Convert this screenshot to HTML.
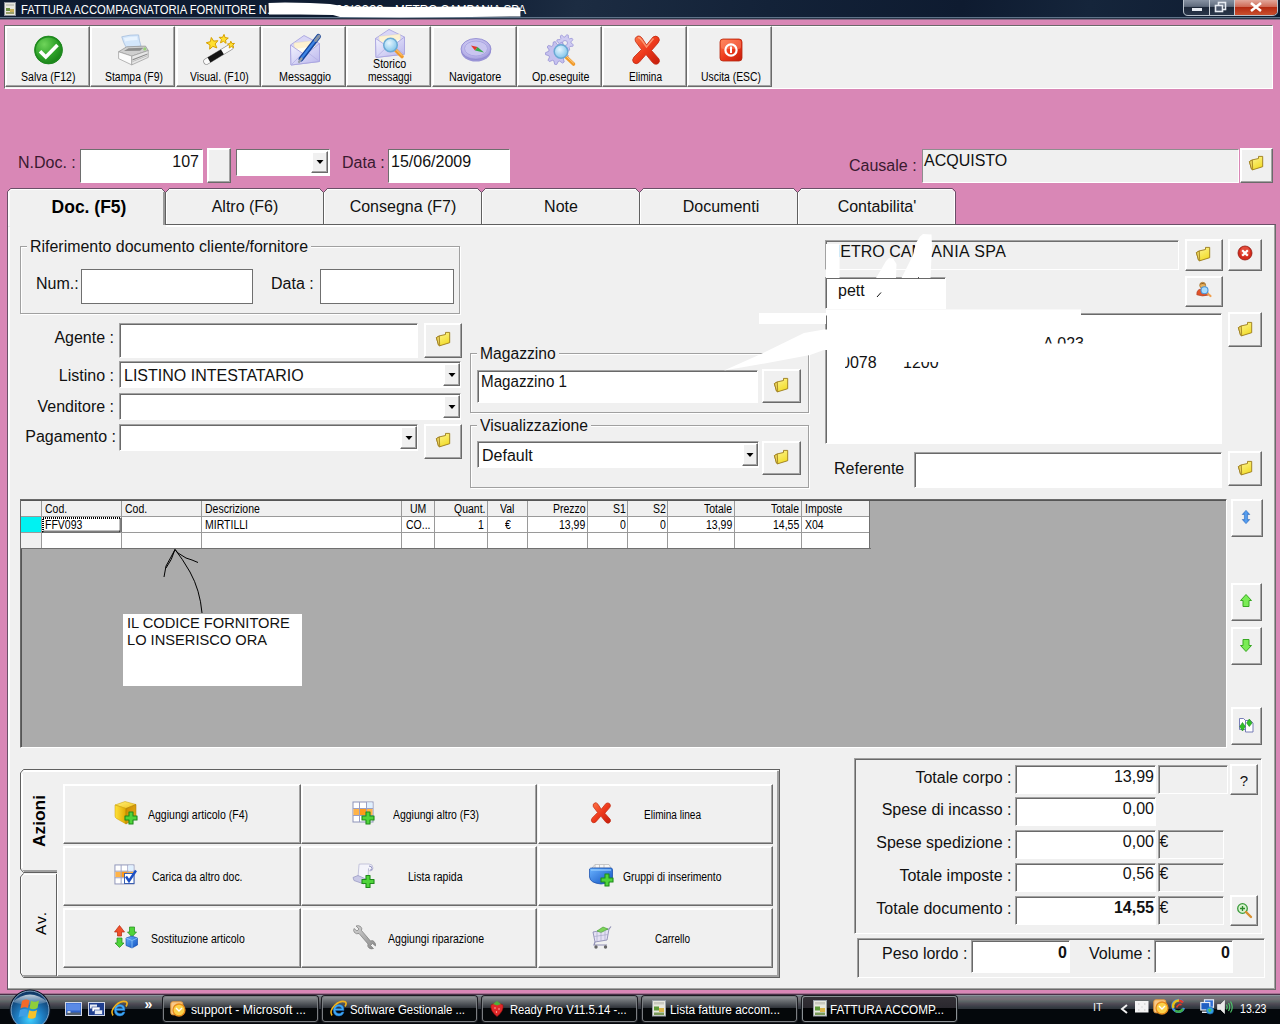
<!DOCTYPE html>
<html><head><meta charset="utf-8"><title>FATTURA ACCOMPAGNATORIA FORNITORE</title>
<style>
*{box-sizing:border-box;margin:0;padding:0}
html,body{width:1280px;height:1024px;overflow:hidden}
body{background:#d987b6;font-family:"Liberation Sans",sans-serif;font-size:16px;color:#111;position:relative}
.a{position:absolute}
.t{position:absolute;white-space:nowrap;line-height:1}
.panel{background:#f0f0f0}
.btn{background:#f0f0f0;border:1px solid;border-color:#fff #6a6a6a #6a6a6a #fff;box-shadow:inset -1px -1px 0 #a3a3a3, inset 1px 1px 0 #fff}
.inp{background:#fff;border:1px solid;border-color:#a2a2a2 #fff #fff #a2a2a2;box-shadow:inset 1px 1px 0 #696969}
.inpg{background:#f0f0f0;border:1px solid;border-color:#a2a2a2 #fff #fff #a2a2a2;box-shadow:inset 1px 1px 0 #6e6e6e}
.inpp{background:#fff;border:1px solid;border-color:#6e6e6e #fff #fff #6e6e6e}
.inpgp{background:#f0f0f0;border:1px solid;border-color:#8e8e8e #fff #fff #8e8e8e}
.flat{background:#fff;border:1px solid #6f6f6f}
.gb{border:1px solid #a0a0a0;box-shadow:1px 1px 0 #fff, inset 1px 1px 0 #fff}
.leg{position:absolute;background:#f0f0f0;height:14px}
svg{position:absolute;overflow:visible}
</style></head><body>
<div class="a " style="left:0px;top:0px;width:1280px;height:20px;background:linear-gradient(100deg,#0e1b30 0,#0f1d33 35%,#1c2c42 45%,#132238 60%,#0e1b30 75%,#15253b 85%,#0e1b30 100%)"></div>
<div class="a " style="left:0px;top:17px;width:1280px;height:1px;background:#5f7389"></div>
<div class="a " style="left:0px;top:18px;width:1280px;height:1px;background:#2a3648"></div>
<div class="a " style="left:0px;top:19px;width:1280px;height:1px;background:#8a6a85"></div>
<svg style="left:4px;top:2px" width="13" height="15" viewBox="0 0 13 15"><rect x="0.5" y="0.5" width="11" height="13" fill="#e8e8e0" stroke="#8a8f99"/><rect x="2" y="2" width="8" height="2" fill="#c9c9c0"/><rect x="2" y="6" width="4" height="3" fill="#6c8f3f"/><rect x="6" y="7" width="4" height="3" fill="#c8b15a"/><rect x="2" y="10" width="8" height="2" fill="#9aa06a"/></svg>
<div class="t" style="left:21.00px;top:4.24px;font-size:12px;color:#fff;transform:scaleX(0.9380);transform-origin:0 0;">FATTURA ACCOMPAGNATORIA FORNITORE N</div>
<div class="t" style="left:267.00px;top:4.24px;font-size:12px;color:#fff;transform:scaleX(1.0395);transform-origin:0 0;">. 107 del 15/06/</div>
<div class="t" style="left:354.00px;top:4.24px;font-size:12px;color:#fff;transform:scaleX(1.1168);transform-origin:0 0;">2009 -</div>
<div class="t" style="left:395.00px;top:4.24px;font-size:12px;color:#fff;transform:scaleX(0.9758);transform-origin:0 0;">METRO CAMPANIA SPA</div>
<svg style="left:0;top:0" width="1280" height="20" viewBox="0 0 1280 20"><path d="M268.500,3 L285,2.500 L310,3 L330,4 L342,6 L352,6.500 L400,7 L470,6.500 L520,7.500 L520.500,16.500 L470,17 L400,17.500 L340,17 L333,15 L300,14.500 L269,14.500 Z" fill="#fff"/></svg>
<svg style="left:1183px;top:0" width="96" height="17" viewBox="0 0 96 17">
<defs><linearGradient id="cg" x1="0" y1="0" x2="0" y2="1"><stop offset="0" stop-color="#8d98a8"/><stop offset=".45" stop-color="#5f6b7d"/><stop offset=".5" stop-color="#1c2738"/><stop offset="1" stop-color="#2a374b"/></linearGradient>
<linearGradient id="cr" x1="0" y1="0" x2="0" y2="1"><stop offset="0" stop-color="#e2a79b"/><stop offset=".45" stop-color="#cf6a56"/><stop offset=".5" stop-color="#b42a12"/><stop offset="1" stop-color="#c9502f"/></linearGradient></defs>
<path d="M0.5,-1 V11 Q0.5,15.5 5,15.5 H89 Q94.5,15.5 94.5,11 V-1 Z" fill="url(#cg)" stroke="#b9c2cc" stroke-width="1"/>
<path d="M52,0 H94 V11 Q94,15 89,15 H52 Z" fill="url(#cr)"/>
<path d="M26.5,0 V15 M51.5,0 V15" stroke="#c5ccd4" stroke-width="1"/>
<rect x="9" y="8" width="10" height="3" fill="#e6ebf2"/>
<rect x="35.5" y="2.500" width="7" height="7" fill="none" stroke="#e6ebf2" stroke-width="1.6"/><rect x="32.500" y="5.500" width="7" height="6" fill="#49556a" stroke="#e6ebf2" stroke-width="1.6"/>
<path d="M68,3 L78,11 M78,3 L68,11" stroke="#fff" stroke-width="2.6"/>
</svg>
<div class="a panel" style="left:4px;top:25px;width:1269px;height:64px;border:1px solid;border-color:#6a6a6a #fff #fff #6a6a6a;box-shadow:inset 1px 1px 0 #fff"></div>
<div class="a btn" style="left:5px;top:26px;width:85px;height:61px;"></div>
<div class="t" style="left:21.25px;top:70.82px;font-size:12.5px;color:#000;transform:scaleX(0.8435);transform-origin:0 0;">Salva (F12)</div>
<div class="a btn" style="left:90px;top:26px;width:85px;height:61px;"></div>
<div class="t" style="left:104.50px;top:70.82px;font-size:12.5px;color:#000;transform:scaleX(0.8349);transform-origin:0 0;">Stampa (F9)</div>
<div class="a btn" style="left:176px;top:26px;width:85px;height:61px;"></div>
<div class="t" style="left:190.12px;top:70.82px;font-size:12.5px;color:#000;transform:scaleX(0.8318);transform-origin:0 0;">Visual. (F10)</div>
<div class="a btn" style="left:261px;top:26px;width:85px;height:61px;"></div>
<div class="t" style="left:278.50px;top:70.82px;font-size:12.5px;color:#000;transform:scaleX(0.8602);transform-origin:0 0;">Messaggio</div>
<div class="a btn" style="left:346px;top:26px;width:85px;height:61px;"></div>
<div class="a btn" style="left:432px;top:26px;width:85px;height:61px;"></div>
<div class="t" style="left:449.38px;top:70.82px;font-size:12.5px;color:#000;transform:scaleX(0.8643);transform-origin:0 0;">Navigatore</div>
<div class="a btn" style="left:517px;top:26px;width:85px;height:61px;"></div>
<div class="t" style="left:531.75px;top:70.82px;font-size:12.5px;color:#000;transform:scaleX(0.8530);transform-origin:0 0;">Op.eseguite</div>
<div class="a btn" style="left:602px;top:26px;width:85px;height:61px;"></div>
<div class="t" style="left:629.00px;top:70.82px;font-size:12.5px;color:#000;transform:scaleX(0.8051);transform-origin:0 0;">Elimina</div>
<div class="a btn" style="left:687px;top:26px;width:85px;height:61px;"></div>
<div class="t" style="left:700.50px;top:70.82px;font-size:12.5px;color:#000;transform:scaleX(0.8307);transform-origin:0 0;">Uscita (ESC)</div>
<div class="t" style="left:372.88px;top:57.82px;font-size:12.5px;color:#000;transform:scaleX(0.8546);transform-origin:0 0;">Storico</div>
<div class="t" style="left:367.62px;top:70.82px;font-size:12.5px;color:#000;transform:scaleX(0.8178);transform-origin:0 0;">messaggi</div>
<div class="t" style="left:18.00px;top:154.86px;font-size:16px;color:#3a1a30;">N.Doc. :</div>
<div class="a inpp" style="left:80px;top:149px;width:123px;height:34px;"></div>
<div class="t" style="left:172.30px;top:154.36px;font-size:16px;color:#111;">107</div>
<div class="a btn" style="left:207px;top:148px;width:24px;height:35px;"></div>
<div class="a inpp" style="left:236px;top:149px;width:94px;height:27px;"></div>
<div class="t" style="left:342.00px;top:154.86px;font-size:16px;color:#3a1a30;">Data :</div>
<div class="a inpp" style="left:388px;top:149px;width:122px;height:34px;"></div>
<div class="t" style="left:391.00px;top:154.36px;font-size:16px;color:#111;">15/06/2009</div>
<div class="t" style="left:849.00px;top:157.86px;font-size:16px;color:#3a1a30;">Causale :</div>
<div class="a inpgp" style="left:922px;top:149px;width:317px;height:34px;"></div>
<div class="t" style="left:924.00px;top:153.36px;font-size:16px;color:#111;">ACQUISTO</div>
<div class="a btn" style="left:1240px;top:148px;width:33px;height:35px;"></div>
<div class="a panel" style="left:7px;top:224px;width:1269px;height:766px;border:1px solid;border-color:#6a5068 #6a6a6a #6a6a6a #6a5068;box-shadow:inset -1px -1px 0 #a3a3a3, inset 1px 1px 0 #fff, inset 2px 2px 0 #fff"></div>
<svg style="left:0;top:0" width="1280" height="1024" viewBox="0 0 1280 1024"><path d="M8,227 V192 L11,189 H952 L955,192 V224 H166 V227 Z" fill="#f0f0f0"/><path d="M7.500,226 V191.500 L10.500,188.500 H952.500 L955.500,191.500 V224" fill="none" stroke="#6a5068" stroke-width="1"/><path d="M8.500,226 V192 L11,189.500 H952" fill="none" stroke="#fff" stroke-width="1"/><path d="M9.500,226 V193" fill="none" stroke="#fff" stroke-width="1" opacity=".7"/><path d="M954.500,192 V224" fill="none" stroke="#fff" stroke-width="1"/><path d="M161.5,188 L165.5,192.500 L169.5,188 Z" fill="#d987b6"/><path d="M161.5,188.500 L165.5,192.500 L169.5,188.500" fill="none" stroke="#6a5068" stroke-width="1"/><rect x="163" y="192" width="2" height="33" fill="#9a9a9a"/><rect x="165" y="192" width="1" height="33" fill="#606060"/><rect x="166" y="193" width="1" height="31" fill="#fff"/><path d="M319.5,188 L323.5,192.500 L327.5,188 Z" fill="#d987b6"/><path d="M319.5,188.500 L323.5,192.500 L327.5,188.500" fill="none" stroke="#6a5068" stroke-width="1"/><rect x="323" y="192" width="1" height="33" fill="#606060"/><rect x="324" y="193" width="1" height="31" fill="#fff"/><path d="M477.5,188 L481.5,192.500 L485.5,188 Z" fill="#d987b6"/><path d="M477.5,188.500 L481.5,192.500 L485.5,188.500" fill="none" stroke="#6a5068" stroke-width="1"/><rect x="481" y="192" width="1" height="33" fill="#606060"/><rect x="482" y="193" width="1" height="31" fill="#fff"/><path d="M635.5,188 L639.5,192.500 L643.5,188 Z" fill="#d987b6"/><path d="M635.5,188.500 L639.5,192.500 L643.5,188.500" fill="none" stroke="#6a5068" stroke-width="1"/><rect x="639" y="192" width="1" height="33" fill="#606060"/><rect x="640" y="193" width="1" height="31" fill="#fff"/><path d="M793.5,188 L797.5,192.500 L801.5,188 Z" fill="#d987b6"/><path d="M793.5,188.500 L797.5,192.500 L801.5,188.500" fill="none" stroke="#6a5068" stroke-width="1"/><rect x="797" y="192" width="1" height="33" fill="#606060"/><rect x="798" y="193" width="1" height="31" fill="#fff"/><rect x="166" y="224" width="790" height="1" fill="#606060"/></svg>
<div class="t" style="left:51.57px;top:199.09px;font-size:17.5px;color:#000;font-weight:bold;">Doc. (F5)</div>
<div class="t" style="left:211.66px;top:199.36px;font-size:16px;color:#111;">Altro (F6)</div>
<div class="t" style="left:349.64px;top:199.36px;font-size:16px;color:#111;">Consegna (F7)</div>
<div class="t" style="left:544.10px;top:199.36px;font-size:16px;color:#111;">Note</div>
<div class="t" style="left:682.76px;top:199.36px;font-size:16px;color:#111;">Documenti</div>
<div class="t" style="left:837.67px;top:199.36px;font-size:16px;color:#111;">Contabilita'</div>
<svg style="left:0;top:0" width="0" height="0"><defs><linearGradient id="gFold" x1="0" y1="0" x2=".6" y2="1"><stop offset="0" stop-color="#fff79a"/><stop offset="1" stop-color="#f2dc2a"/></linearGradient></defs></svg>
<div class="a btn" style="left:311px;top:151px;width:17px;height:22px;"></div>
<svg style="left:315.5px;top:160.0px" width="8" height="4" viewBox="0 0 8 4"><path d="M0.500,0 H7.500 L4,4 Z" fill="#000"/></svg>
<svg style="left:1249px;top:156px" width="14" height="14" viewBox="0 0 14 14"><path d="M0.400,5.600 L3.300,3.900 L9.500,2.500 V0.400 H13.700 V10.700 L3.700,13.800 L2.500,13.100 Z" fill="url(#gFold)" stroke="#9a7a1a" stroke-width=".9" stroke-linejoin="round"/><path d="M0.400,5.600 L3.300,3.900 L3.700,13.800 L2.500,13.100 Z" fill="#e9d25a" stroke="#9a7a1a" stroke-width=".8" stroke-linejoin="round"/></svg>
<div class="a gb" style="left:20px;top:246px;width:440px;height:68px;"></div>
<div class="a " style="left:27px;top:244px;width:284px;height:6px;background:#f0f0f0"></div>
<div class="t" style="left:30.00px;top:238.86px;font-size:16px;color:#111;transform:scaleX(0.9955);transform-origin:0 0;">Riferimento documento cliente/fornitore</div>
<div class="t" style="left:36.00px;top:276.36px;font-size:16px;color:#111;">Num.:</div>
<div class="a flat" style="left:81px;top:269px;width:172px;height:35px;"></div>
<div class="t" style="left:271.00px;top:276.36px;font-size:16px;color:#111;">Data :</div>
<div class="a flat" style="left:320px;top:269px;width:134px;height:35px;"></div>
<div class="t" style="left:54.40px;top:330.36px;font-size:16px;color:#111;">Agente :</div>
<div class="a inp" style="left:119px;top:323px;width:299px;height:35px;"></div>
<div class="a btn" style="left:424px;top:323px;width:38px;height:35px;"></div>
<svg style="left:436px;top:332px" width="14" height="14" viewBox="0 0 14 14"><path d="M0.400,5.600 L3.300,3.900 L9.500,2.500 V0.400 H13.700 V10.700 L3.700,13.800 L2.500,13.100 Z" fill="url(#gFold)" stroke="#9a7a1a" stroke-width=".9" stroke-linejoin="round"/><path d="M0.400,5.600 L3.300,3.900 L3.700,13.800 L2.500,13.100 Z" fill="#e9d25a" stroke="#9a7a1a" stroke-width=".8" stroke-linejoin="round"/></svg>
<div class="t" style="left:58.86px;top:368.36px;font-size:16px;color:#111;">Listino :</div>
<div class="a inp" style="left:119px;top:361px;width:342px;height:27px;"></div>
<div class="a btn" style="left:443px;top:363px;width:17px;height:23px;"></div>
<svg style="left:447.5px;top:372.5px" width="8" height="4" viewBox="0 0 8 4"><path d="M0.500,0 H7.500 L4,4 Z" fill="#000"/></svg>
<div class="t" style="left:124.00px;top:367.86px;font-size:16px;color:#111;">LISTINO INTESTATARIO</div>
<div class="t" style="left:37.50px;top:399.36px;font-size:16px;color:#111;">Venditore :</div>
<div class="a inp" style="left:119px;top:393px;width:342px;height:27px;"></div>
<div class="a btn" style="left:443px;top:395px;width:17px;height:23px;"></div>
<svg style="left:447.5px;top:404.5px" width="8" height="4" viewBox="0 0 8 4"><path d="M0.500,0 H7.500 L4,4 Z" fill="#000"/></svg>
<div class="t" style="left:25.27px;top:429.36px;font-size:16px;color:#111;">Pagamento :</div>
<div class="a inp" style="left:119px;top:424px;width:299px;height:27px;"></div>
<div class="a btn" style="left:400px;top:426px;width:17px;height:23px;"></div>
<svg style="left:404.5px;top:435.5px" width="8" height="4" viewBox="0 0 8 4"><path d="M0.500,0 H7.500 L4,4 Z" fill="#000"/></svg>
<div class="a btn" style="left:424px;top:424px;width:38px;height:35px;"></div>
<svg style="left:436px;top:433px" width="14" height="14" viewBox="0 0 14 14"><path d="M0.400,5.600 L3.300,3.900 L9.500,2.500 V0.400 H13.700 V10.700 L3.700,13.800 L2.500,13.100 Z" fill="url(#gFold)" stroke="#9a7a1a" stroke-width=".9" stroke-linejoin="round"/><path d="M0.400,5.600 L3.300,3.900 L3.700,13.800 L2.500,13.100 Z" fill="#e9d25a" stroke="#9a7a1a" stroke-width=".8" stroke-linejoin="round"/></svg>
<div class="a gb" style="left:470px;top:353px;width:339px;height:60px;"></div>
<div class="a " style="left:477px;top:351px;width:81.75px;height:6px;background:#f0f0f0"></div>
<div class="t" style="left:480.00px;top:345.86px;font-size:16px;color:#111;transform:scaleX(0.9790);transform-origin:0 0;">Magazzino</div>
<div class="a inp" style="left:477px;top:370px;width:281px;height:33px;"></div>
<div class="t" style="left:480.50px;top:374.36px;font-size:16px;color:#111;transform:scaleX(0.9480);transform-origin:0 0;">Magazzino 1</div>
<div class="a btn" style="left:762px;top:369px;width:39px;height:34px;"></div>
<svg style="left:774px;top:378px" width="14" height="14" viewBox="0 0 14 14"><path d="M0.400,5.600 L3.300,3.900 L9.500,2.500 V0.400 H13.700 V10.700 L3.700,13.800 L2.500,13.100 Z" fill="url(#gFold)" stroke="#9a7a1a" stroke-width=".9" stroke-linejoin="round"/><path d="M0.400,5.600 L3.300,3.900 L3.700,13.800 L2.500,13.100 Z" fill="#e9d25a" stroke="#9a7a1a" stroke-width=".8" stroke-linejoin="round"/></svg>
<div class="a gb" style="left:470px;top:425px;width:339px;height:63px;"></div>
<div class="a " style="left:477px;top:423px;width:114px;height:6px;background:#f0f0f0"></div>
<div class="t" style="left:480.00px;top:417.86px;font-size:16px;color:#111;transform:scaleX(0.9819);transform-origin:0 0;">Visualizzazione</div>
<div class="a inp" style="left:477px;top:441px;width:282px;height:27px;"></div>
<div class="a btn" style="left:742px;top:443px;width:16px;height:23px;"></div>
<svg style="left:746.0px;top:452.5px" width="8" height="4" viewBox="0 0 8 4"><path d="M0.500,0 H7.500 L4,4 Z" fill="#000"/></svg>
<div class="t" style="left:482.00px;top:448.36px;font-size:16px;color:#111;">Default</div>
<div class="a btn" style="left:762px;top:441px;width:39px;height:34px;"></div>
<svg style="left:774px;top:450px" width="14" height="14" viewBox="0 0 14 14"><path d="M0.400,5.600 L3.300,3.900 L9.500,2.500 V0.400 H13.700 V10.700 L3.700,13.800 L2.500,13.100 Z" fill="url(#gFold)" stroke="#9a7a1a" stroke-width=".9" stroke-linejoin="round"/><path d="M0.400,5.600 L3.300,3.900 L3.700,13.800 L2.500,13.100 Z" fill="#e9d25a" stroke="#9a7a1a" stroke-width=".8" stroke-linejoin="round"/></svg>
<div class="a inpg" style="left:825px;top:240px;width:354px;height:30px;"></div>
<div class="t" style="left:827px;top:244.36px;font-size:16px;color:#111">METRO CAM<span style="margin-left:-4.3px">P</span><span style="letter-spacing:.43px">ANIA SPA</span></div>
<div class="a btn" style="left:1185px;top:239px;width:38px;height:32px;"></div>
<svg style="left:1196px;top:247px" width="14" height="14" viewBox="0 0 14 14"><path d="M0.400,5.600 L3.300,3.900 L9.500,2.500 V0.400 H13.700 V10.700 L3.700,13.800 L2.500,13.100 Z" fill="url(#gFold)" stroke="#9a7a1a" stroke-width=".9" stroke-linejoin="round"/><path d="M0.400,5.600 L3.300,3.900 L3.700,13.800 L2.500,13.100 Z" fill="#e9d25a" stroke="#9a7a1a" stroke-width=".8" stroke-linejoin="round"/></svg>
<div class="a btn" style="left:1228px;top:239px;width:34px;height:32px;"></div>
<svg style="left:1237px;top:245px" width="16" height="16" viewBox="0 0 16 16"><circle cx="8" cy="8" r="7" fill="#d42a1c" stroke="#8f1a10" stroke-width=".8"/><circle cx="8" cy="6.500" r="5" fill="#ef6a55" opacity=".5"/><path d="M5.200,5.200 L10.800,10.800 M10.800,5.200 L5.200,10.800" stroke="#fff" stroke-width="2.200"/></svg>
<div class="a inp" style="left:825px;top:277px;width:121px;height:32px;"></div>
<div class="t" style="left:838.00px;top:282.86px;font-size:16px;color:#111;">pett</div>
<div class="a btn" style="left:1185px;top:276px;width:38px;height:31px;"></div>
<svg style="left:1195px;top:281px" width="18" height="18" viewBox="0 0 18 18"><circle cx="7.700" cy="4.300" r="3" fill="#e8b05a" stroke="#9a6a2a" stroke-width=".7"/><path d="M4.700,3.500 Q7.500,0.300 10.700,3.500 Q7.700,2.500 4.700,3.500 Z" fill="#8a5a20"/><path d="M1.800,13.800 Q1.500,8.500 6,8 L10,8 Q13,9 13.500,14 Q7.500,16 1.800,13.800 Z" fill="#e0522a" stroke="#a8381a" stroke-width=".6"/><path d="M12,12 L15.500,15" stroke="#f0a050" stroke-width="2.200" stroke-linecap="round"/><circle cx="9.500" cy="9.300" r="3.500" fill="#a8dcff" stroke="#4a94d8" stroke-width="1.100"/></svg>
<div class="a inp" style="left:825px;top:313px;width:397px;height:131px;"></div>
<div class="t" style="left:841.00px;top:354.86px;font-size:16px;color:#111;">0078</div>
<div class="t" style="left:903.00px;top:354.86px;font-size:16px;color:#111;">1200</div>
<div class="t" style="left:1043.00px;top:335.86px;font-size:16px;color:#111;">A 023</div>
<div class="a btn" style="left:1228px;top:312px;width:34px;height:35px;"></div>
<svg style="left:1238px;top:322px" width="14" height="14" viewBox="0 0 14 14"><path d="M0.400,5.600 L3.300,3.900 L9.500,2.500 V0.400 H13.700 V10.700 L3.700,13.800 L2.500,13.100 Z" fill="url(#gFold)" stroke="#9a7a1a" stroke-width=".9" stroke-linejoin="round"/><path d="M0.400,5.600 L3.300,3.900 L3.700,13.800 L2.500,13.100 Z" fill="#e9d25a" stroke="#9a7a1a" stroke-width=".8" stroke-linejoin="round"/></svg>
<div class="t" style="left:834.00px;top:461.36px;font-size:16px;color:#111;">Referente</div>
<div class="a inp" style="left:914px;top:452px;width:308px;height:36px;"></div>
<div class="a btn" style="left:1228px;top:451px;width:34px;height:35px;"></div>
<svg style="left:1238px;top:461px" width="14" height="14" viewBox="0 0 14 14"><path d="M0.400,5.600 L3.300,3.900 L9.500,2.500 V0.400 H13.700 V10.700 L3.700,13.800 L2.500,13.100 Z" fill="url(#gFold)" stroke="#9a7a1a" stroke-width=".9" stroke-linejoin="round"/><path d="M0.400,5.600 L3.300,3.900 L3.700,13.800 L2.500,13.100 Z" fill="#e9d25a" stroke="#9a7a1a" stroke-width=".8" stroke-linejoin="round"/></svg>
<svg style="left:0;top:0" width="1280" height="1024" viewBox="0 0 1280 1024"><g fill="#fff">
<rect x="826" y="309.500" width="255" height="6"/><rect x="759" y="313" width="67" height="11"/>
<path d="M724,370.500 L761,354 L804,333 L824,329.500 H830 V350 H824 L810,355 L770,362.500 Z"/>
<rect x="1040" y="343.500" width="50" height="9"/><rect x="895" y="352" width="51" height="10"/>
<path d="M838,352 H849 L844,372 H838 Z"/>
<rect x="826" y="244" width="13.500" height="34"/>
<path d="M876,278 L882,268 L886,261 L889,258 L893,258.500 L896.500,264 L896,278 Z"/>
<path d="M901.500,278 L907.500,266 L913,255 L916,243 L920,236.500 L923,234 L931.500,234.500 L932,246 L930.500,278 Z"/>
<rect x="864.500" y="282" width="26" height="6"/>
</g><path d="M877,297 L881,292.500" stroke="#111" stroke-width="1"/><rect x="918" y="277" width="1" height="1.500" fill="#555"/></svg>
<div class="a " style="left:20px;top:499px;width:1207px;height:249px;background:#ababab;border:1px solid;border-color:#6a6a6a #fff #fff #6a6a6a;box-shadow:inset 1px 1px 0 #555"></div>
<div class="a " style="left:21px;top:501px;width:849px;height:48px;background:#fff"></div>
<div class="a " style="left:21px;top:501px;width:849px;height:15px;background:#f0f0f0"></div>
<div class="a " style="left:21px;top:516px;width:20px;height:33px;background:#f0f0f0"></div>
<div class="a " style="left:21px;top:517px;width:20px;height:15px;background:#00f2f2"></div>
<svg style="left:0;top:0" width="1280" height="1024" viewBox="0 0 1280 1024"><rect x="41.0" y="501" width="1" height="48" fill="#9a9a9a"/><rect x="121.0" y="501" width="1" height="48" fill="#9a9a9a"/><rect x="201.0" y="501" width="1" height="48" fill="#9a9a9a"/><rect x="401.0" y="501" width="1" height="48" fill="#9a9a9a"/><rect x="434.0" y="501" width="1" height="48" fill="#9a9a9a"/><rect x="487.0" y="501" width="1" height="48" fill="#9a9a9a"/><rect x="527.0" y="501" width="1" height="48" fill="#9a9a9a"/><rect x="587.0" y="501" width="1" height="48" fill="#9a9a9a"/><rect x="627.0" y="501" width="1" height="48" fill="#9a9a9a"/><rect x="667.0" y="501" width="1" height="48" fill="#9a9a9a"/><rect x="734.0" y="501" width="1" height="48" fill="#9a9a9a"/><rect x="801.0" y="501" width="1" height="48" fill="#9a9a9a"/><rect x="869.0" y="501" width="1" height="48" fill="#9a9a9a"/><rect x="21" y="516" width="849" height="1" fill="#9a9a9a"/><rect x="21" y="532" width="849" height="1" fill="#9a9a9a"/><rect x="21" y="548" width="849" height="1" fill="#9a9a9a"/><rect x="21" y="548" width="850" height="1" fill="#707070"/><rect x="869" y="501" width="1" height="48" fill="#707070"/><rect x="43" y="518" width="77.500" height="13.500" fill="none" stroke="#000" stroke-width="2" stroke-dasharray="1 1"/></svg>
<div class="t" style="left:45.00px;top:502.82px;font-size:12.5px;color:#000;transform:scaleX(0.8400);transform-origin:0 0;">Cod.</div>
<div class="t" style="left:125.00px;top:502.82px;font-size:12.5px;color:#000;transform:scaleX(0.8400);transform-origin:0 0;">Cod.</div>
<div class="t" style="left:205.00px;top:502.82px;font-size:12.5px;color:#000;transform:scaleX(0.8400);transform-origin:0 0;">Descrizione</div>
<div class="t" style="left:409.84px;top:502.82px;font-size:12.5px;color:#000;transform:scaleX(0.8400);transform-origin:0 0;">UM</div>
<div class="t" style="left:454.48px;top:502.82px;font-size:12.5px;color:#000;transform:scaleX(0.8400);transform-origin:0 0;">Quant.</div>
<div class="t" style="left:500.30px;top:502.82px;font-size:12.5px;color:#000;transform:scaleX(0.8400);transform-origin:0 0;">Val</div>
<div class="t" style="left:552.82px;top:502.82px;font-size:12.5px;color:#000;transform:scaleX(0.8400);transform-origin:0 0;">Prezzo</div>
<div class="t" style="left:612.66px;top:502.82px;font-size:12.5px;color:#000;transform:scaleX(0.8400);transform-origin:0 0;">S1</div>
<div class="t" style="left:652.66px;top:502.82px;font-size:12.5px;color:#000;transform:scaleX(0.8400);transform-origin:0 0;">S2</div>
<div class="t" style="left:703.98px;top:502.82px;font-size:12.5px;color:#000;transform:scaleX(0.8400);transform-origin:0 0;">Totale</div>
<div class="t" style="left:770.98px;top:502.82px;font-size:12.5px;color:#000;transform:scaleX(0.8400);transform-origin:0 0;">Totale</div>
<div class="t" style="left:805.00px;top:502.82px;font-size:12.5px;color:#000;transform:scaleX(0.8400);transform-origin:0 0;">Imposte</div>
<div class="t" style="left:45.00px;top:518.82px;font-size:12.5px;color:#000;transform:scaleX(0.8400);transform-origin:0 0;">FFV093</div>
<div class="t" style="left:205.00px;top:518.82px;font-size:12.5px;color:#000;transform:scaleX(0.8400);transform-origin:0 0;">MIRTILLI</div>
<div class="t" style="left:406.00px;top:518.82px;font-size:12.5px;color:#000;transform:scaleX(0.8400);transform-origin:0 0;">CO...</div>
<div class="t" style="left:478.16px;top:518.82px;font-size:12.5px;color:#000;transform:scaleX(0.8400);transform-origin:0 0;">1</div>
<div class="t" style="left:504.58px;top:518.82px;font-size:12.5px;color:#000;transform:scaleX(0.8400);transform-origin:0 0;">€</div>
<div class="t" style="left:559.22px;top:518.82px;font-size:12.5px;color:#000;transform:scaleX(0.8400);transform-origin:0 0;">13,99</div>
<div class="t" style="left:619.66px;top:518.82px;font-size:12.5px;color:#000;transform:scaleX(0.8400);transform-origin:0 0;">0</div>
<div class="t" style="left:659.66px;top:518.82px;font-size:12.5px;color:#000;transform:scaleX(0.8400);transform-origin:0 0;">0</div>
<div class="t" style="left:705.72px;top:518.82px;font-size:12.5px;color:#000;transform:scaleX(0.8400);transform-origin:0 0;">13,99</div>
<div class="t" style="left:772.72px;top:518.82px;font-size:12.5px;color:#000;transform:scaleX(0.8400);transform-origin:0 0;">14,55</div>
<div class="t" style="left:805.00px;top:518.82px;font-size:12.5px;color:#000;transform:scaleX(0.8400);transform-origin:0 0;">X04</div>
<div class="a " style="left:123px;top:614px;width:179px;height:72px;background:#fff"></div>
<div class="t" style="left:127.00px;top:616.48px;font-size:14.67px;color:#111;">IL CODICE FORNITORE</div>
<div class="t" style="left:127.00px;top:632.98px;font-size:14.67px;color:#111;">LO INSERISCO ORA</div>
<svg style="left:0;top:0" width="1280" height="1024" viewBox="0 0 1280 1024"><path d="M202,613 Q200,590 190,572 Q182,558 175,549.500 L171,557 L166,566 L164,577 M175,549.500 Q172,560 166,568 M175,549.500 L178,553 L186,558 L192,560 L198,562.500" fill="none" stroke="#000" stroke-width="1"/></svg>
<div class="a btn" style="left:1231px;top:499px;width:32px;height:38px;"></div>
<svg style="left:1241.5px;top:510px" width="8" height="14" viewBox="0 0 8 14"><defs><linearGradient id="gUD" x1="0" y1="0" x2="1" y2="0"><stop offset="0" stop-color="#2f74d0"/><stop offset=".5" stop-color="#5aa4f4"/><stop offset="1" stop-color="#2f74d0"/></linearGradient></defs><path d="M4,0.300 L7.800,4.500 H5.600 V9.500 H7.800 L4,13.700 L0.200,9.500 H2.400 V4.500 H0.200 Z" fill="url(#gUD)" stroke="#2660b4" stroke-width=".5"/></svg>
<div class="a btn" style="left:1231px;top:583px;width:31px;height:38px;"></div>
<svg style="left:1240px;top:594.0px" width="12" height="13" viewBox="0 0 12 13"><path d="M6,0.500 L11.500,6.500 H9 V12.500 H3 V6.500 H0.500 Z" fill="#7aec55" stroke="#38a822" stroke-width="1"/></svg>
<div class="a btn" style="left:1231px;top:627px;width:31px;height:38px;"></div>
<svg style="left:1240px;top:639.0px" width="12" height="13" viewBox="0 0 12 13"><path d="M6,12.500 L11.500,6.500 H9 V0.500 H3 V6.500 H0.500 Z" fill="#7aec55" stroke="#38a822" stroke-width="1"/></svg>
<div class="a btn" style="left:1231px;top:707px;width:31px;height:38px;"></div>
<svg style="left:1239px;top:717.5px" width="15" height="15" viewBox="0 0 15 15"><path d="M0.500,0.500 H4.500 L7,3 V11.500 H0.500 Z" fill="#fff" stroke="#6a70b0" stroke-width=".9"/><path d="M6.500,2.500 H11.500 L14,5 V14 H6.500 Z" fill="#fff" stroke="#6a70b0" stroke-width=".9"/><path d="M3.500,4.500 L6.200,8.500 L3.500,13 L0.800,8.500 Z" fill="#2fbf2a" stroke="#178a14" stroke-width=".6"/><path d="M10.300,1 L13,5 L10.300,8.500 L7.600,5 Z" fill="#2fbf2a" stroke="#178a14" stroke-width=".6"/></svg>
<svg style="left:0;top:0" width="1280" height="1024" viewBox="0 0 1280 1024"><path d="M20.500,869 V773 L23.500,769.500 H779.500 V977.500 H57" fill="#f0f0f0" stroke="none"/><rect x="777" y="771" width="2" height="206" fill="#a0a0a0"/><rect x="779" y="769" width="1" height="209" fill="#606060"/><rect x="57" y="975" width="721" height="2" fill="#a0a0a0"/><rect x="57" y="977" width="723" height="1" fill="#606060"/><path d="M20.500,869 V773 L23.500,769.500 H779" fill="none" stroke="#606060" stroke-width="1"/><path d="M21.500,868 V773.500 L24,770.500 H777" fill="none" stroke="#fff" stroke-width="1"/><path d="M22.500,868 V774 M24,771.500 H777" fill="none" stroke="#fff" stroke-width="1"/><path d="M20.500,869 L23.500,872.500 H57" fill="none" stroke="#606060" stroke-width="1"/><path d="M23,870.500 H57 M24,871.500 H57" stroke="#a0a0a0" stroke-width="1"/><path d="M21,977 V877 L24,873.500 H56.500 V977 Z" fill="#f0f0f0"/><path d="M20.500,973 V877 L23.500,873.500" fill="none" stroke="#606060" stroke-width="1"/><path d="M21.500,973 V877.500 L24,874.500 H56" fill="none" stroke="#fff" stroke-width="1"/><path d="M20.500,973 L23.500,977.500 H57" fill="none" stroke="#606060" stroke-width="1"/><path d="M23,975.500 H57 M24,976.500 H57" stroke="#a0a0a0" stroke-width="1"/><rect x="56" y="874" width="1" height="102" fill="#606060"/><rect x="57" y="874" width="1" height="102" fill="#fff"/></svg>
<div class="t" style="left:30.5px;top:846.5px;font-size:17.33px;font-weight:bold;transform:rotate(-90deg);transform-origin:0 0;color:#000">Azioni</div>
<div class="t" style="left:32.5px;top:935px;font-size:15.5px;transform:rotate(-90deg);transform-origin:0 0;color:#000;letter-spacing:1px">Av.</div>
<div class="a btn" style="left:63px;top:784px;width:238px;height:60px;"></div>
<div class="t" style="left:147.50px;top:808.82px;font-size:12.5px;color:#000;transform:scaleX(0.8417);transform-origin:0 0;">Aggiungi articolo (F4)</div>
<div class="a btn" style="left:301px;top:784px;width:236px;height:60px;"></div>
<div class="t" style="left:392.50px;top:808.82px;font-size:12.5px;color:#000;transform:scaleX(0.8363);transform-origin:0 0;">Aggiungi altro (F3)</div>
<div class="a btn" style="left:538px;top:784px;width:235px;height:60px;"></div>
<div class="t" style="left:644.00px;top:808.82px;font-size:12.5px;color:#000;transform:scaleX(0.8043);transform-origin:0 0;">Elimina linea</div>
<div class="a btn" style="left:63px;top:846px;width:238px;height:60px;"></div>
<div class="t" style="left:152.25px;top:870.82px;font-size:12.5px;color:#000;transform:scaleX(0.8350);transform-origin:0 0;">Carica da altro doc.</div>
<div class="a btn" style="left:301px;top:846px;width:236px;height:60px;"></div>
<div class="t" style="left:408.25px;top:870.82px;font-size:12.5px;color:#000;transform:scaleX(0.8433);transform-origin:0 0;">Lista rapida</div>
<div class="a btn" style="left:538px;top:846px;width:235px;height:60px;"></div>
<div class="t" style="left:623.25px;top:870.82px;font-size:12.5px;color:#000;transform:scaleX(0.8291);transform-origin:0 0;">Gruppi di inserimento</div>
<div class="a btn" style="left:63px;top:908px;width:238px;height:60px;"></div>
<div class="t" style="left:150.62px;top:932.82px;font-size:12.5px;color:#000;transform:scaleX(0.8380);transform-origin:0 0;">Sostituzione articolo</div>
<div class="a btn" style="left:301px;top:908px;width:236px;height:60px;"></div>
<div class="t" style="left:387.50px;top:932.82px;font-size:12.5px;color:#000;transform:scaleX(0.8423);transform-origin:0 0;">Aggiungi riparazione</div>
<div class="a btn" style="left:538px;top:908px;width:235px;height:60px;"></div>
<div class="t" style="left:655.00px;top:932.82px;font-size:12.5px;color:#000;transform:scaleX(0.7997);transform-origin:0 0;">Carrello</div>
<div class="a " style="left:854px;top:758px;width:408px;height:176px;border:1px solid;border-color:#a0a0a0 #fff #fff #a0a0a0;box-shadow:inset 1px 1px 0 #696969"></div>
<div class="a inp" style="left:1015px;top:765px;width:141px;height:29px;"></div>
<div class="t" style="left:915.44px;top:770.36px;font-size:16px;color:#111;">Totale corpo :</div>
<div class="t" style="left:1113.96px;top:768.86px;font-size:16px;color:#111;">13,99</div>
<div class="a inpg" style="left:1158px;top:765px;width:70px;height:29px;"></div>
<div class="a inp" style="left:1015px;top:797px;width:141px;height:29px;"></div>
<div class="t" style="left:881.65px;top:802.36px;font-size:16px;color:#111;">Spese di incasso :</div>
<div class="t" style="left:1122.86px;top:800.86px;font-size:16px;color:#111;">0,00</div>
<div class="a inp" style="left:1015px;top:830px;width:141px;height:29px;"></div>
<div class="t" style="left:876.29px;top:835.36px;font-size:16px;color:#111;">Spese spedizione :</div>
<div class="t" style="left:1122.86px;top:833.86px;font-size:16px;color:#111;">0,00</div>
<div class="a inpg" style="left:1158px;top:830px;width:66px;height:29px;"></div>
<div class="t" style="left:1159.50px;top:833.86px;font-size:16px;color:#111;">€</div>
<div class="a inp" style="left:1015px;top:862.5px;width:141px;height:29px;"></div>
<div class="t" style="left:899.44px;top:867.86px;font-size:16px;color:#111;">Totale imposte :</div>
<div class="t" style="left:1122.86px;top:866.36px;font-size:16px;color:#111;">0,56</div>
<div class="a inpg" style="left:1158px;top:862.5px;width:66px;height:29px;"></div>
<div class="t" style="left:1159.50px;top:866.36px;font-size:16px;color:#111;">€</div>
<div class="a inp" style="left:1015px;top:896px;width:141px;height:29px;"></div>
<div class="t" style="left:876.30px;top:901.36px;font-size:16px;color:#111;">Totale documento :</div>
<div class="t" style="left:1113.96px;top:899.86px;font-size:16px;color:#111;font-weight:bold;">14,55</div>
<div class="a inpg" style="left:1158px;top:896px;width:66px;height:29px;"></div>
<div class="t" style="left:1159.50px;top:899.86px;font-size:16px;color:#111;">€</div>
<div class="a btn" style="left:1230px;top:764px;width:28px;height:31px;"></div>
<div class="t" style="left:1239.83px;top:773.20px;font-size:15px;color:#111;">?</div>
<div class="a btn" style="left:1230px;top:895px;width:28px;height:31px;"></div>
<svg style="left:1236px;top:902px" width="17" height="17" viewBox="0 0 17 17"><circle cx="6.500" cy="6.500" r="4.800" fill="#d8f3d0" stroke="#3a9a3a" stroke-width="1.300"/><path d="M6.500,4 V9 M4,6.500 H9" stroke="#2c8a2c" stroke-width="1.300"/><path d="M10,10 L15,15" stroke="#d9902f" stroke-width="2.400" stroke-linecap="round"/></svg>
<div class="a " style="left:857px;top:938px;width:408px;height:40px;border:1px solid;border-color:#a0a0a0 #fff #fff #a0a0a0;box-shadow:inset 1px 1px 0 #696969"></div>
<div class="t" style="left:882.00px;top:946.36px;font-size:16px;color:#111;">Peso lordo :</div>
<div class="a inp" style="left:971px;top:940px;width:99px;height:33px;"></div>
<div class="t" style="left:1058.10px;top:945.36px;font-size:16px;color:#111;font-weight:bold;">0</div>
<div class="t" style="left:1089.00px;top:946.36px;font-size:16px;color:#111;">Volume :</div>
<div class="a inp" style="left:1154px;top:940px;width:79px;height:33px;"></div>
<div class="t" style="left:1221.10px;top:945.36px;font-size:16px;color:#111;font-weight:bold;">0</div>
<div class="a " style="left:0px;top:994px;width:1280px;height:30px;background:linear-gradient(#4a3048 0,#a0a8b0 1px,#8a9298 1.5px,#727a80 2px,#786e76 5px,#5e6868 7px,#4e4a54 10px,#363c44 13px,#30363c 14.500px,#04080c 15px,#04080c 100%)"></div>
<div class="a " style="left:0px;top:993px;width:1280px;height:1px;background:#a5708f"></div>
<div class="a " style="left:0px;top:994px;width:1280px;height:1px;background:#4a3048"></div>
<div class="a " style="left:162.5px;top:996px;width:155px;height:26px;background:linear-gradient(#8e9294 0,#686c70 4px,#464a50 8px,#2e3238 11px,#05080a 11.500px,#05080a 100%);border:1px solid #7a7e82;border-radius:3px;box-shadow:0 0 0 1px #1a1c20"></div>
<div class="t" style="left:190.50px;top:1003.82px;font-size:12.5px;color:#fff;transform:scaleX(0.9796);transform-origin:0 0;">support - Microsoft ...</div>
<div class="a " style="left:322.3px;top:996px;width:155px;height:26px;background:linear-gradient(#8e9294 0,#686c70 4px,#464a50 8px,#2e3238 11px,#05080a 11.500px,#05080a 100%);border:1px solid #7a7e82;border-radius:3px;box-shadow:0 0 0 1px #1a1c20"></div>
<div class="t" style="left:350.30px;top:1003.82px;font-size:12.5px;color:#fff;transform:scaleX(0.9094);transform-origin:0 0;">Software Gestionale ...</div>
<div class="a " style="left:482.1px;top:996px;width:155px;height:26px;background:linear-gradient(#8e9294 0,#686c70 4px,#464a50 8px,#2e3238 11px,#05080a 11.500px,#05080a 100%);border:1px solid #7a7e82;border-radius:3px;box-shadow:0 0 0 1px #1a1c20"></div>
<div class="t" style="left:510.10px;top:1003.82px;font-size:12.5px;color:#fff;transform:scaleX(0.8982);transform-origin:0 0;">Ready Pro V11.5.14 -...</div>
<div class="a " style="left:641.9000000000001px;top:996px;width:155px;height:26px;background:linear-gradient(#8e9294 0,#686c70 4px,#464a50 8px,#2e3238 11px,#05080a 11.500px,#05080a 100%);border:1px solid #7a7e82;border-radius:3px;box-shadow:0 0 0 1px #1a1c20"></div>
<div class="t" style="left:669.90px;top:1003.82px;font-size:12.5px;color:#fff;transform:scaleX(0.9481);transform-origin:0 0;">Lista fatture accom...</div>
<div class="a " style="left:801.7px;top:996px;width:155px;height:26px;background:linear-gradient(#343036 0,#2a282e 11px,#020305 11.500px,#020305 100%);border:1px solid #8a9094;border-radius:3px;box-shadow:0 0 0 1px #1a1c20"></div>
<div class="t" style="left:829.70px;top:1003.82px;font-size:12.5px;color:#fff;transform:scaleX(0.9361);transform-origin:0 0;">FATTURA ACCOMP...</div>
<div class="t" style="left:1093.30px;top:1002.17px;font-size:11.5px;color:#f0f0f0;transform:scaleX(0.9491);transform-origin:0 0;">IT</div>
<div class="t" style="left:1239.70px;top:1003.32px;font-size:12.5px;color:#fff;transform:scaleX(0.8472);transform-origin:0 0;">13.23</div>
<svg style="left:0;top:0" width="1280" height="1024" viewBox="0 0 1280 1024"><path d="M1127,1005 L1122,1009 L1127,1013" fill="none" stroke="#f0f0f0" stroke-width="2"/></svg>
<div class="t" style="left:144.50px;top:997.05px;font-size:14px;color:#fff;font-weight:bold;">»</div>
<svg style="left:9px;top:989px" width="42" height="36" viewBox="0 0 42 36"><defs><radialGradient id="orb" cx=".5" cy=".75" r=".75"><stop offset="0" stop-color="#3fd0ff"/><stop offset=".45" stop-color="#1f7fc4"/><stop offset="1" stop-color="#0e2f5a"/></radialGradient><linearGradient id="orbh" x1="0" y1="0" x2="0" y2="1"><stop offset="0" stop-color="#fff" stop-opacity=".75"/><stop offset="1" stop-color="#fff" stop-opacity=".08"/></linearGradient></defs>
<circle cx="21" cy="21" r="20.500" fill="#0a1424"/><circle cx="21" cy="21" r="19" fill="url(#orb)" stroke="#9fc4e6" stroke-width=".8"/><path d="M3.500,17 Q21,2 38.500,17 Q21,23 3.500,17 Z" fill="url(#orbh)" transform="translate(0,-4)"/>
<path d="M13,12 Q17,9.500 20.500,11.500 L19,19 Q15.500,17.500 11.500,19.500 Z" fill="#f26a2a"/><path d="M22,11.800 Q26,14 30,11.500 L28.500,19 Q24.500,21.500 20.500,19.300 Z" fill="#8fcf3a"/><path d="M11,21 Q15,19 18.700,20.800 L17.200,28 Q13.500,26.500 9.500,28.500 Z" fill="#3f9fe6"/><path d="M20.200,21.200 Q24,23.500 28,21 L26.500,28.500 Q22.500,31 18.700,28.500 Z" fill="#f7c22a"/></svg>
<svg style="left:65px;top:1002px" width="17" height="15" viewBox="0 0 17 15"><rect x="0.500" y="0.500" width="16" height="13" fill="#2f62c9" stroke="#cfd6e6" stroke-width="1"/><rect x="1.500" y="1.500" width="14" height="7" fill="#5a8ae6"/><rect x="1.500" y="10.500" width="14" height="2.500" fill="#55606e"/><rect x="2.500" y="9" width="3" height="2" fill="#c9d0dc"/></svg>
<svg style="left:88px;top:1002px" width="17" height="15" viewBox="0 0 17 15"><rect x="0.500" y="0.500" width="16" height="13" fill="#1f3f8f" stroke="#cfd6e6" stroke-width="1"/><rect x="2" y="2.500" width="7" height="4" fill="#e6ebf4"/><rect x="4" y="5" width="8" height="4.500" fill="#fff" stroke="#1f3f8f" stroke-width=".6"/><rect x="6.500" y="8" width="8" height="4.500" fill="#e6ebf4" stroke="#1f3f8f" stroke-width=".6"/></svg>
<svg style="left:111px;top:1000px" width="17" height="18" viewBox="0 0 17 18"><path d="M14,10.500 H5.500 Q6,13.500 9,13.500 Q11,13.500 11.800,12 H14 Q12.800,16 9,16 Q3.500,16 3.200,10 Q3.500,4.500 9,4.500 Q14.200,4.700 14,10.500 Z M5.600,8.500 H11.600 Q11.200,6.500 8.800,6.500 Q6.200,6.500 5.600,8.500 Z" fill="#3fa9f5" stroke="#1c6fc4" stroke-width=".5" fill-rule="evenodd"/><path d="M2,15.500 Q-1,11 5,5 Q11,0 15.500,2 Q17,3.500 15,6.500" fill="none" stroke="#f2b21a" stroke-width="1.600"/></svg>
<svg style="left:169.5px;top:1000.5px" width="16" height="16" viewBox="0 0 16 16"><rect x="0.800" y="0.800" width="12" height="13" rx="2" fill="#f7c98a" stroke="#e89a3a" stroke-width="1"/><circle cx="9" cy="9" r="6" fill="#fbd24a" stroke="#e88a1a" stroke-width="1.300"/><path d="M6,7 L9,10 L12,7" fill="none" stroke="#fff" stroke-width="1.400"/></svg>
<svg style="left:329.5px;top:1000px" width="17" height="18" viewBox="0 0 17 18"><path d="M14,10.500 H5.500 Q6,13.500 9,13.500 Q11,13.500 11.800,12 H14 Q12.800,16 9,16 Q3.500,16 3.200,10 Q3.500,4.500 9,4.500 Q14.200,4.700 14,10.500 Z M5.600,8.500 H11.600 Q11.200,6.500 8.800,6.500 Q6.200,6.500 5.600,8.500 Z" fill="#3fa9f5" stroke="#1c6fc4" stroke-width=".5" fill-rule="evenodd"/><path d="M2,15.500 Q-1,11 5,5 Q11,0 15.500,2 Q17,3.500 15,6.500" fill="none" stroke="#f2b21a" stroke-width="1.600"/></svg>
<svg style="left:489px;top:1000px" width="16" height="17" viewBox="0 0 16 17"><path d="M2,5 Q8,1 14,5 Q15,11 8,16.500 Q1,11 2,5 Z" fill="#e0282a" stroke="#9a1212" stroke-width=".6"/><path d="M4,4 L8,1 L12,4 L8,5.500 Z" fill="#4fae3a"/><circle cx="6" cy="8" r=".7" fill="#ffd0c0"/><circle cx="10" cy="9" r=".7" fill="#ffd0c0"/><circle cx="7.500" cy="12" r=".7" fill="#ffd0c0"/></svg>
<svg style="left:652px;top:1000px" width="15" height="17" viewBox="0 0 15 17"><rect x="0.500" y="0.500" width="13" height="15.500" fill="#e8e8e0" stroke="#9aa0a9"/><rect x="2" y="2" width="10" height="2.500" fill="#c9c9c0"/><rect x="2" y="6.500" width="5" height="4" fill="#5f9a3a"/><rect x="7" y="8" width="5" height="4" fill="#d9b44a"/><rect x="2" y="12.500" width="10" height="2.500" fill="#7a9a5a"/></svg>
<svg style="left:812.5px;top:1000px" width="15" height="17" viewBox="0 0 15 17"><rect x="0.500" y="0.500" width="13" height="15.500" fill="#e8e8e0" stroke="#9aa0a9"/><rect x="2" y="2" width="10" height="2.500" fill="#c9c9c0"/><rect x="2" y="6.500" width="5" height="4" fill="#5f9a3a"/><rect x="7" y="8" width="5" height="4" fill="#d9b44a"/><rect x="2" y="12.500" width="10" height="2.500" fill="#7a9a5a"/></svg>
<svg style="left:1135px;top:1001px" width="14" height="12" viewBox="0 0 14 12"><rect x="0" y="0" width="13.500" height="11.500" fill="#f4f4f4"/><path d="M3,3 H4.500 M9,3 H10.500 M6.500,6 H7.500 M3,9 H4.500 M9,9 H10.500" stroke="#c4c4c4" stroke-width="1"/></svg>
<svg style="left:1152.5px;top:999px" width="16" height="16" viewBox="0 0 16 16"><rect x="0.800" y="0.800" width="12" height="13" rx="2" fill="#f7c98a" stroke="#e89a3a" stroke-width="1"/><circle cx="9" cy="9" r="6" fill="#fbd24a" stroke="#e88a1a" stroke-width="1.300"/><path d="M6,7 L9,10 L12,7" fill="none" stroke="#fff" stroke-width="1.400"/></svg>
<svg style="left:1171px;top:999px" width="15" height="15" viewBox="0 0 15 15"><path d="M12,3 A6,6 0 1 0 13,9" fill="none" stroke="#3f8fe6" stroke-width="2.400"/><path d="M2.500,9 A5.500,5.500 0 0 1 8,1.500" fill="none" stroke="#e6c21a" stroke-width="2.400"/><path d="M8,1.500 A5.500,5.500 0 0 1 12,3.500" fill="none" stroke="#e03a2a" stroke-width="2.400"/><path d="M4,11.500 A5.500,5.500 0 0 0 12,10" fill="none" stroke="#3fae4a" stroke-width="2.400"/><path d="M5.500,8.500 Q8,4 10.500,6" fill="none" stroke="#e03a2a" stroke-width="1.600"/></svg>
<svg style="left:1200px;top:999px" width="15" height="16" viewBox="0 0 15 16"><rect x="4.500" y="0.800" width="9" height="7.500" fill="#2f6fd4" stroke="#e6ecf6" stroke-width="1.200"/><rect x="0.800" y="3.500" width="9" height="7.500" fill="#1f5fc4" stroke="#e6ecf6" stroke-width="1.200"/><rect x="2" y="12.500" width="6" height="1.500" fill="#e6ecf6"/><circle cx="10" cy="11.500" r="3.600" fill="#2f9fe6" stroke="#1c5fa4" stroke-width=".6"/><path d="M8,10.500 Q10,9 11.500,11 Q10.500,13.500 9,13" fill="#4fc44a"/></svg>
<svg style="left:1217px;top:1000px" width="16" height="14" viewBox="0 0 16 14"><path d="M0.500,4.500 H3.500 L7.500,0.500 V13.500 L3.500,9.500 H0.500 Z" fill="#e8e8e8" stroke="#fff" stroke-width=".6"/><path d="M9.500,4.500 Q11,7 9.500,9.500 M11.500,3 Q14,7 11.500,11 M13.500,1.500 Q17,7 13.500,12.500" fill="none" stroke="#4fc46a" stroke-width="1.200"/></svg>
<svg style="left:0;top:0" width="0" height="0"><defs>
<radialGradient id="gG" cx=".35" cy=".3" r=".8"><stop offset="0" stop-color="#6fd45a"/><stop offset=".55" stop-color="#2fa32a"/><stop offset="1" stop-color="#147a14"/></radialGradient>
<linearGradient id="gEnv" x1="0" y1="0" x2="1" y2="1"><stop offset="0" stop-color="#f4f4ff"/><stop offset="1" stop-color="#b9b5ec"/></linearGradient>
<linearGradient id="gRed" x1="0" y1="0" x2="1" y2="1"><stop offset="0" stop-color="#ff7a4a"/><stop offset=".5" stop-color="#ee3a1c"/><stop offset="1" stop-color="#c41c0c"/></linearGradient>
<radialGradient id="gLens" cx=".4" cy=".35" r=".7"><stop offset="0" stop-color="#e6f6ff"/><stop offset="1" stop-color="#7cc3ea"/></radialGradient>
<linearGradient id="gPr" x1="0" y1="0" x2="0" y2="1"><stop offset="0" stop-color="#d8d8d8"/><stop offset="1" stop-color="#8e8e8e"/></linearGradient>
<radialGradient id="gNav" cx=".45" cy=".4" r=".7"><stop offset="0" stop-color="#e9e6ff"/><stop offset=".7" stop-color="#b4aee6"/><stop offset="1" stop-color="#8d87cf"/></radialGradient>
</defs></svg>
<svg style="left:32.5px;top:34px" width="32" height="32" viewBox="0 0 32 32"><circle cx="15.500" cy="16" r="14" fill="url(#gG)" stroke="#1a7a1a" stroke-width=".6"/><circle cx="15.500" cy="16" r="13.300" fill="none" stroke="#1f8a1f" stroke-width="1.400"/><path d="M7,17.200 L12.800,23 L24.500,11" fill="none" stroke="#fff" stroke-width="3.600" stroke-linejoin="miter"/></svg>
<svg style="left:117.5px;top:34px" width="32" height="32" viewBox="0 0 32 32"><path d="M8.750,14.600 Q5,8 3.750,2.750 Q12,0.500 20.600,0.900 Q21,6 23,12 Z" fill="#d3e6fb" stroke="#9db8d8" stroke-width=".7"/><path d="M6,4 Q12,2.500 19,2.500 L19.500,6 Q12,6 7,7.500 Z" fill="#eef6ff" opacity=".8"/><path d="M0.600,17.750 L8.750,12.750 L27.500,12.100 L30.250,16.500 L13.750,22.100 Z" fill="#cfcfcf" stroke="#8f8f8f" stroke-width=".7"/><path d="M6,17 L10.500,14.200 L25.500,13.700 L22,16.800 Z" fill="#8c8c8c"/><path d="M0.600,17.750 L13.750,22.100 V30.900 L0.600,24.600 Z" fill="#fbfbfb" stroke="#9a9a9a" stroke-width=".7"/><path d="M13.750,22.100 L30.250,16.500 V23.400 L13.750,30.900 Z" fill="#e6e6e6" stroke="#9a9a9a" stroke-width=".7"/><path d="M14.500,25.200 L29.500,19.400 V20.600 L14.500,26.600 Z" fill="#8a8a8a"/><path d="M14.500,27.200 L29.500,21.300 V22 L14.500,28 Z" fill="#b4b4b4"/><circle cx="26.800" cy="14.900" r="1.600" fill="#8fd06a" opacity=".85"/></svg>
<svg style="left:203.5px;top:34px" width="32" height="32" viewBox="0 0 32 32"><path d="M2.500,27.500 L26.500,13" stroke="#8a8a8a" stroke-width="6.400" stroke-linecap="round"/><path d="M2.500,27.500 L26.500,13" stroke="#fafafa" stroke-width="5" stroke-linecap="round"/><path d="M5,26 L18.400,17.900" stroke="#141414" stroke-width="5.600"/><polygon points="7.32,3.49 9.62,7.09 13.87,6.69 11.16,9.99 12.86,13.91 8.88,12.35 5.68,15.17 5.94,10.91 2.26,8.74 6.39,7.66" fill="#ffe030" stroke="#d8a000" stroke-width="1" stroke-linejoin="round"/><polygon points="20.02,0.42 21.02,3.57 24.28,4.12 21.59,6.04 22.07,9.31 19.41,7.35 16.45,8.82 17.50,5.69 15.18,3.32 18.49,3.35" fill="#ffe030" stroke="#d8a000" stroke-width="1" stroke-linejoin="round"/><polygon points="26.78,7.21 27.96,9.47 30.51,9.45 28.72,11.27 29.53,13.69 27.25,12.56 25.19,14.07 25.57,11.55 23.49,10.07 26.01,9.64" fill="#ffe030" stroke="#d8a000" stroke-width="1" stroke-linejoin="round"/></svg>
<svg style="left:288.5px;top:34px" width="32" height="32" viewBox="0 0 32 32"><path d="M1.500,11 L15,1.500 L30.500,9.500 L30.500,27.500 L2,31 Z" fill="#d9d6f6" stroke="#a9a5df" stroke-width=".9"/><path d="M5,9 L26,6.500 L27,20 L6,23 Z" fill="#fffdf2" stroke="#d9d3c0" stroke-width=".5"/><path d="M5,9 L26,6.500 L26.500,12 L5.500,15 Z" fill="#fbe9b8" opacity=".55"/><path d="M1.500,11 L16,21 L30.500,9.500 L30.500,27.500 L2,31 Z" fill="url(#gEnv)" stroke="#a9a5df" stroke-width=".9"/><path d="M2,31 L13.500,19.500 M30.500,27.500 L19,18.700" stroke="#b4b0e4" stroke-width=".8"/><path d="M29.500,2.500 L12,25" stroke="#16459c" stroke-width="5" stroke-linecap="round"/><path d="M29,2.800 L13,23.500" stroke="#3f86e6" stroke-width="2.200" stroke-linecap="round"/><path d="M12.500,24.500 L10,28" stroke="#9aa0aa" stroke-width="2.200" stroke-linecap="round"/><path d="M30,2 L26.500,6.500" stroke="#8894a6" stroke-width="3" stroke-linecap="round"/></svg>
<svg style="left:374.0px;top:29px" width="32" height="32" viewBox="0 0 32 32"><g transform="translate(0,-1) scale(1,.95)"><path d="M1.500,11 L15,1.500 L30.500,9.500 L30.500,27.500 L2,31 Z" fill="#d9d6f6" stroke="#a9a5df" stroke-width=".9"/><path d="M5,9 L26,6.500 L27,20 L6,23 Z" fill="#fffdf2" stroke="#d9d3c0" stroke-width=".5"/><path d="M5,9 L26,6.500 L26.500,12 L5.500,15 Z" fill="#fbe9b8" opacity=".55"/><path d="M1.500,11 L16,21 L30.500,9.500 L30.500,27.500 L2,31 Z" fill="url(#gEnv)" stroke="#a9a5df" stroke-width=".9"/><path d="M2,31 L13.500,19.500 M30.500,27.500 L19,18.700" stroke="#b4b0e4" stroke-width=".8"/></g><path d="M21,20.500 L28,27.500" stroke="#f09a2a" stroke-width="3.600" stroke-linecap="round"/><path d="M21.500,20 L28,26.500" stroke="#ffd08a" stroke-width="1" stroke-linecap="round"/><circle cx="16.500" cy="16" r="6.800" fill="url(#gLens)" stroke="#6aa9d4" stroke-width="1.500"/></svg>
<svg style="left:459.5px;top:34px" width="32" height="32" viewBox="0 0 32 32"><ellipse cx="16" cy="17" rx="15" ry="10.500" fill="#9a94d6"/><ellipse cx="16" cy="15" rx="15" ry="10.500" fill="url(#gNav)" stroke="#8d87cf" stroke-width=".8"/><ellipse cx="16" cy="14.500" rx="11.500" ry="7.500" fill="#c9c5f0" stroke="#a59fe0" stroke-width=".8"/><path d="M11,11.500 L17.500,13 L15,16.500 Z" fill="#e2382c"/><path d="M17.500,13 L24,18.500 L15,16.500 Z" fill="#35a84a"/></svg>
<svg style="left:544.5px;top:34px" width="32" height="32" viewBox="0 0 32 32"><polygon points="28.3,10.7 27.8,12.3 25.0,12.4 24.2,13.3 24.7,16.1 23.2,16.9 21.1,14.9 20.0,15.0 18.3,17.3 16.7,16.8 16.6,14.0 15.7,13.2 12.9,13.7 12.1,12.2 14.1,10.1 14.0,9.0 11.7,7.3 12.2,5.7 15.0,5.6 15.8,4.7 15.3,1.9 16.8,1.1 18.9,3.1 20.0,3.0 21.7,0.7 23.3,1.2 23.4,4.0 24.3,4.8 27.1,4.3 27.9,5.8 25.9,7.9 26.0,9.0" fill="#cfcbf2" stroke="#9c97d8" stroke-width=".8"/><circle cx="20" cy="9" r="2.500" fill="#f0f0f0" stroke="#9c97d8" stroke-width=".8"/><polygon points="23.3,21.3 22.7,23.2 19.3,23.4 18.4,24.6 19.2,28.0 17.5,29.1 14.7,27.1 13.3,27.4 11.7,30.5 9.7,30.3 8.9,26.9 7.6,26.3 4.4,27.6 3.0,26.2 4.5,23.1 3.9,21.7 0.6,20.7 0.5,18.7 3.7,17.3 4.1,15.9 2.2,13.0 3.4,11.4 6.7,12.4 7.9,11.5 8.3,8.1 10.3,7.6 12.2,10.5 13.7,10.7 16.2,8.3 18.0,9.2 17.6,12.6 18.6,13.7 22.1,13.5 22.9,15.3 20.4,17.7 20.5,19.2" fill="#c5c1ee" stroke="#9590d4" stroke-width=".8"/><path d="M20,22 L28.500,30" stroke="#f09a2a" stroke-width="3.600" stroke-linecap="round"/><path d="M20.500,21.500 L28.500,29" stroke="#ffd08a" stroke-width="1" stroke-linecap="round"/><circle cx="16" cy="17.500" r="6.800" fill="url(#gLens)" stroke="#6aa9d4" stroke-width="1.500"/></svg>
<svg style="left:629.5px;top:34px" width="32" height="32" viewBox="0 0 32 32"><path d="M8,2 Q10,1.500 12,4 L16.500,11 L23,3 Q26,1 28.500,3.500 Q30.500,6 28,9 L21.500,16.500 L29,25 Q30.500,28 27.500,30 Q24.500,31 22.500,28.500 L16,20.500 L9,28.500 Q6,31 3.500,28.500 Q1.500,26 4,23 L11.500,15.500 L5.500,7.500 Q4,3.500 8,2 Z" fill="url(#gRed)" stroke="#c2280f" stroke-width=".8"/><path d="M8,3.500 Q10,3.500 12,6.500 L16.500,13 L23.500,4.500" fill="none" stroke="#ffb08a" stroke-width="1.500" opacity=".7"/></svg>
<svg style="left:714.5px;top:34px" width="32" height="32" viewBox="0 0 32 32"><rect x="5" y="5" width="22" height="22" rx="3" fill="url(#gRed)" stroke="#b8280f" stroke-width=".8"/><rect x="6" y="6" width="20" height="9" rx="2.500" fill="#ff9a78" opacity=".45"/><circle cx="16" cy="16" r="5.600" fill="none" stroke="#fff" stroke-width="2.200"/><rect x="15" y="12.500" width="2" height="6.500" fill="#fff"/></svg>
<svg style="left:0;top:0" width="0" height="0"><defs>
<linearGradient id="gCubeT" x1="0" y1="0" x2="1" y2="1"><stop offset="0" stop-color="#fff27a"/><stop offset="1" stop-color="#f2c21a"/></linearGradient>
<linearGradient id="gCubeL" x1="0" y1="0" x2="1" y2="0"><stop offset="0" stop-color="#ffe23a"/><stop offset="1" stop-color="#e0a800"/></linearGradient>
<linearGradient id="gCubeR" x1="0" y1="0" x2="1" y2="1"><stop offset="0" stop-color="#c98a00"/><stop offset="1" stop-color="#e8b01a"/></linearGradient>
<linearGradient id="gBlue" x1="0" y1="0" x2="1" y2="1"><stop offset="0" stop-color="#6ab4ff"/><stop offset="1" stop-color="#0f4fbf"/></linearGradient>
<linearGradient id="gGray" x1="0" y1="0" x2="1" y2="1"><stop offset="0" stop-color="#d4d4d4"/><stop offset="1" stop-color="#8a8a8a"/></linearGradient>
</defs></svg>
<svg style="left:114px;top:801px" width="24" height="24" viewBox="0 0 24 24"><path d="M1,4 L11,0.500 L22,3.500 L12,7.500 Z" fill="url(#gCubeT)" stroke="#c89a00" stroke-width=".5"/><path d="M1,4 L12,7.500 V23 L2.500,17.500 Q1,16.500 1,15 Z" fill="url(#gCubeL)" stroke="#c89a00" stroke-width=".5"/><path d="M12,7.500 L22,3.500 V17 L12,23 Z" fill="url(#gCubeR)" stroke="#a87400" stroke-width=".5"/><path d="M15,11 h4 v4 h4 v4 h-4 v4 h-4 v-4 h-4 v-4 h4 Z" fill="#4fd43a" stroke="#1f8a1a" stroke-width="1.100" stroke-linejoin="round"/></svg>
<svg style="left:352px;top:801px" width="24" height="24" viewBox="0 0 24 24"><g transform="translate(0,0)"><rect x="1" y="1" width="20" height="20" fill="#fff" stroke="#8d93b8" stroke-width="1"/><rect x="1.500" y="8" width="19" height="6" fill="#ffb347"/><rect x="8" y="8" width="6" height="6" fill="#ff9a1a"/><path d="M7.500,1 V21 M14.500,1 V21 M1,7.500 H21 M1,14.500 H21" stroke="#9aa0c4" stroke-width="1"/><rect x="15" y="1.500" width="5.500" height="5.500" fill="#dff0ff"/></g><path d="M14,11 h4 v4 h4 v4 h-4 v4 h-4 v-4 h-4 v-4 h4 Z" fill="#4fd43a" stroke="#1f8a1a" stroke-width="1.100" stroke-linejoin="round"/></svg>
<svg style="left:589px;top:801px" width="24" height="24" viewBox="0 0 24 24"><g transform="scale(.72) translate(0.500,0.500)"><path d="M8,2 Q10,1.500 12,4 L16.500,11 L23,3 Q26,1 28.500,3.500 Q30.500,6 28,9 L21.500,16.500 L29,25 Q30.500,28 27.500,30 Q24.500,31 22.500,28.500 L16,20.500 L9,28.500 Q6,31 3.500,28.500 Q1.500,26 4,23 L11.500,15.500 L5.500,7.500 Q4,3.500 8,2 Z" fill="url(#gRed)" stroke="#c2280f" stroke-width="1"/></g></svg>
<svg style="left:114px;top:863px" width="24" height="24" viewBox="0 0 24 24"><g transform="translate(0,1) scale(.95)"><rect x="1" y="1" width="20" height="20" fill="#fff" stroke="#8d93b8" stroke-width="1"/><rect x="1.500" y="8" width="19" height="6" fill="#ffb347"/><rect x="8" y="8" width="6" height="6" fill="#ff9a1a"/><path d="M7.500,1 V21 M14.500,1 V21 M1,7.500 H21 M1,14.500 H21" stroke="#9aa0c4" stroke-width="1"/><rect x="15" y="1.500" width="5.500" height="5.500" fill="#dff0ff"/></g><rect x="10.500" y="10.500" width="9.500" height="10" fill="#fff" stroke="#3a5fb0" stroke-width="1"/><path d="M12,13.500 L15,18 L22,7.500" fill="none" stroke="#1c4fc4" stroke-width="2.400"/></svg>
<svg style="left:352px;top:863px" width="24" height="24" viewBox="0 0 24 24"><path d="M7,2 Q6,1 9,1 H17 Q21,1 21,5 Q21,8 18,8 Q16,8 16.500,5.500 L16,17 L6,14 Z" fill="#f4f4fb" stroke="#b9b9d4" stroke-width=".8"/><path d="M17,3 Q20,3 20,5.500 Q20,7.500 18,7" fill="none" stroke="#8f8fc0" stroke-width="1"/><path d="M1,14.500 L6,12.500 L16,17 L12,21 L2,17.500 Z" fill="#c9c9e6" stroke="#9a9ac4" stroke-width=".8"/><path d="M14,12.5 h4 v4 h4 v4 h-4 v4 h-4 v-4 h-4 v-4 h4 Z" fill="#4fd43a" stroke="#1f8a1a" stroke-width="1.100" stroke-linejoin="round"/></svg>
<svg style="left:589px;top:863px" width="24" height="24" viewBox="0 0 24 24"><path d="M3,5 L6,1.500 H20 L22,5 Z" fill="#f6f6f6" stroke="#b4b4b4" stroke-width=".7"/><path d="M6,1.500 V6 M10.500,1.500 V6 M15,1.500 V6" stroke="#c4c4c4" stroke-width="1"/><path d="M0.500,6 Q1,5 3,5 H22 Q23.500,5 23.500,7 V15 Q23,20 12,21 Q1,20 0.500,14 Z" fill="url(#gBlue)" stroke="#0f45a8" stroke-width=".7"/><path d="M2,7 H22" stroke="#9ad0ff" stroke-width="1.200"/><path d="M16,11 h4 v4 h4 v4 h-4 v4 h-4 v-4 h-4 v-4 h4 Z" fill="#4fd43a" stroke="#1f8a1a" stroke-width="1.100" stroke-linejoin="round"/></svg>
<svg style="left:114px;top:925px" width="24" height="24" viewBox="0 0 24 24"><path d="M5.500,0.500 L10.500,7 H7.500 V11 H3.500 V7 H0.500 Z" fill="#f0512a" stroke="#b8280f" stroke-width=".7"/><path d="M13,2.500 H18 V0.500 L23,5 L18,9.500 V7.500 H13 Z" fill="#4fd43a" stroke="#1f8a1a" stroke-width=".7" transform="rotate(90 17 6)"/><path d="M10,14 H5 V12 L0.500,16.500 L5,21 V19 H10 Z" fill="#4fd43a" stroke="#1f8a1a" stroke-width=".7" transform="rotate(-90 6 17)"/><path d="M12,13 L18,11 L23.500,13 V20 L18,23 L12,20.500 Z" fill="url(#gBlue)" stroke="#0f45a8" stroke-width=".6"/><path d="M12,13 L18,15.500 L23.500,13 M18,15.500 V23" stroke="#9ad0ff" stroke-width=".7" fill="none"/></svg>
<svg style="left:352px;top:925px" width="24" height="24" viewBox="0 0 24 24"><path d="M2,3.500 Q1,5.500 2.500,7.500 Q4.500,9.500 7,8.500 L16,19 Q15,21.500 17,23 Q19,24.500 21.500,23.500 L18.500,20.500 L20.500,18.500 L23.500,21 Q24,18.500 22,16.500 Q20.500,15 18.500,16 L9.500,5.500 Q10.500,3 8.500,1.500 Q6.500,0 4,1 L7,4 L5,6 Z" fill="url(#gGray)" stroke="#7a7a7a" stroke-width=".7"/></svg>
<svg style="left:589px;top:925px" width="24" height="24" viewBox="0 0 24 24"><path d="M4,7 L20,4 L18,15 L6,17 Z" fill="#e4e0f4" stroke="#8f8fb4" stroke-width=".9"/><path d="M8,6 L14,2 L19,4 L12,7.500 Z" fill="#7fd45a" stroke="#3a9a2a" stroke-width=".6"/><path d="M20,4 L22,1.500 M6,17 L5,20 H18" fill="none" stroke="#8f8fb4" stroke-width="1.200"/><path d="M8,7 V16 M12,6.500 V16 M16,5.500 V15 M5,11.500 L19,9.500" stroke="#a9a9c9" stroke-width=".7"/><circle cx="7" cy="22" r="1.700" fill="#666"/><circle cx="16.500" cy="22" r="1.700" fill="#666"/></svg>
</body></html>
